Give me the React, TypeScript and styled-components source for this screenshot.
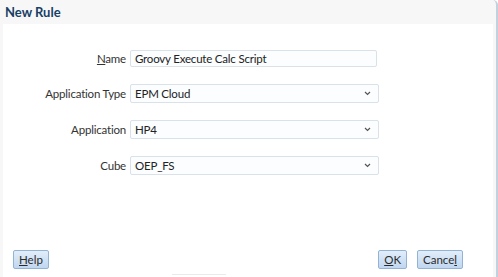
import styled, { createGlobalStyle } from "styled-components";

const GlobalStyle = createGlobalStyle`
  html, body {
    margin: 0;
    padding: 0;
    background: #ffffff;
  }
  body {
    font-family: Lato, "Liberation Sans", sans-serif;
  }
`;

const Dialog = styled.div`
  box-sizing: border-box;
  width: 498px;
  height: 277px;
  display: flex;
  flex-direction: column;
  background: #f7f7f7;
  border-right: 2px solid #c3d0dd;
  border-top-right-radius: 5px;
  overflow: hidden;
`;

const Header = styled.div`
  height: 24px;
  flex: none;
  display: flex;
  align-items: center;
  padding-left: 5px;
  padding-bottom: 1px;
  box-sizing: border-box;
  font-size: 13px;
  font-weight: 700;
  color: #183f66;
`;

const Panel = styled.div`
  flex: 1;
  margin: 0 3px 0 3px;
  background: #ffffff;
  display: flex;
  flex-direction: column;
`;

const Form = styled.div`
  display: grid;
  grid-template-columns: 123px 249px;
  column-gap: 4px;
  row-gap: 17px;
  align-items: center;
  padding-top: 26px;
`;

const Label = styled.label`
  justify-self: end;
  font-size: 11.5px;
  letter-spacing: -0.2px;
  color: #333333;
  white-space: nowrap;
`;

const Field = styled.div<{ $tall?: boolean; $short?: boolean }>`
  box-sizing: border-box;
  height: ${(p) => (p.$tall ? "19px" : "17px")};
  width: ${(p) => (p.$short ? "247px" : "249px")};
  display: flex;
  align-items: center;
  justify-content: space-between;
  padding: 0 7px 0 4px;
  border: 1px solid #d9e1e9;
  border-radius: 2px;
  background: #fbfdff;
  font-size: 11.5px;
  letter-spacing: -0.2px;
  color: #222222;
  white-space: nowrap;
`;

const Chevron = () => (
  <svg width="7" height="5" viewBox="0 0 7 5">
    <path d="M1 1 L3.5 3.5 L6 1" fill="none" stroke="#555" strokeWidth="1.2" />
  </svg>
);

const Footer = styled.div`
  margin-top: auto;
  display: flex;
  align-items: center;
  padding: 0 30px 5px 10px;
`;

const Spacer = styled.div`
  flex: 1;
`;

const Button = styled.button<{ $gap?: number }>`
  box-sizing: border-box;
  height: 19px;
  padding: 0 5px;
  margin-left: ${(p) => p.$gap ?? 0}px;
  border: 1px solid #93b3d6;
  border-radius: 2px;
  background: linear-gradient(#e2edf9, #c0d7f0);
  font-family: Lato, "Liberation Sans", sans-serif;
  font-size: 11.5px;
  color: #2a2a2a;
  line-height: 17px;
`;

const Trace = styled.div`
  height: 2px;
  width: 54px;
  margin-left: 169px;
  border-top: 1px solid #eaeaea;
`;

export default function App() {
  return (
    <>
      <GlobalStyle />
      <Dialog>
        <Header>New Rule</Header>
        <Panel>
          <Form>
            <Label>
              <u>N</u>ame
            </Label>
            <Field $short>Groovy Execute Calc Script</Field>
            <Label>Application Type</Label>
            <Field $tall>
              EPM Cloud
              <Chevron />
            </Field>
            <Label>Application</Label>
            <Field $tall>
              HP4
              <Chevron />
            </Field>
            <Label>Cube</Label>
            <Field $tall>
              OEP_FS
              <Chevron />
            </Field>
          </Form>
          <Footer>
            <Button>
              <u>H</u>elp
            </Button>
            <Spacer />
            <Button>
              <u>O</u>K
            </Button>
            <Button $gap={10}>
              Cance<u>l</u>
            </Button>
          </Footer>
          <Trace />
        </Panel>
      </Dialog>
    </>
  );
}
